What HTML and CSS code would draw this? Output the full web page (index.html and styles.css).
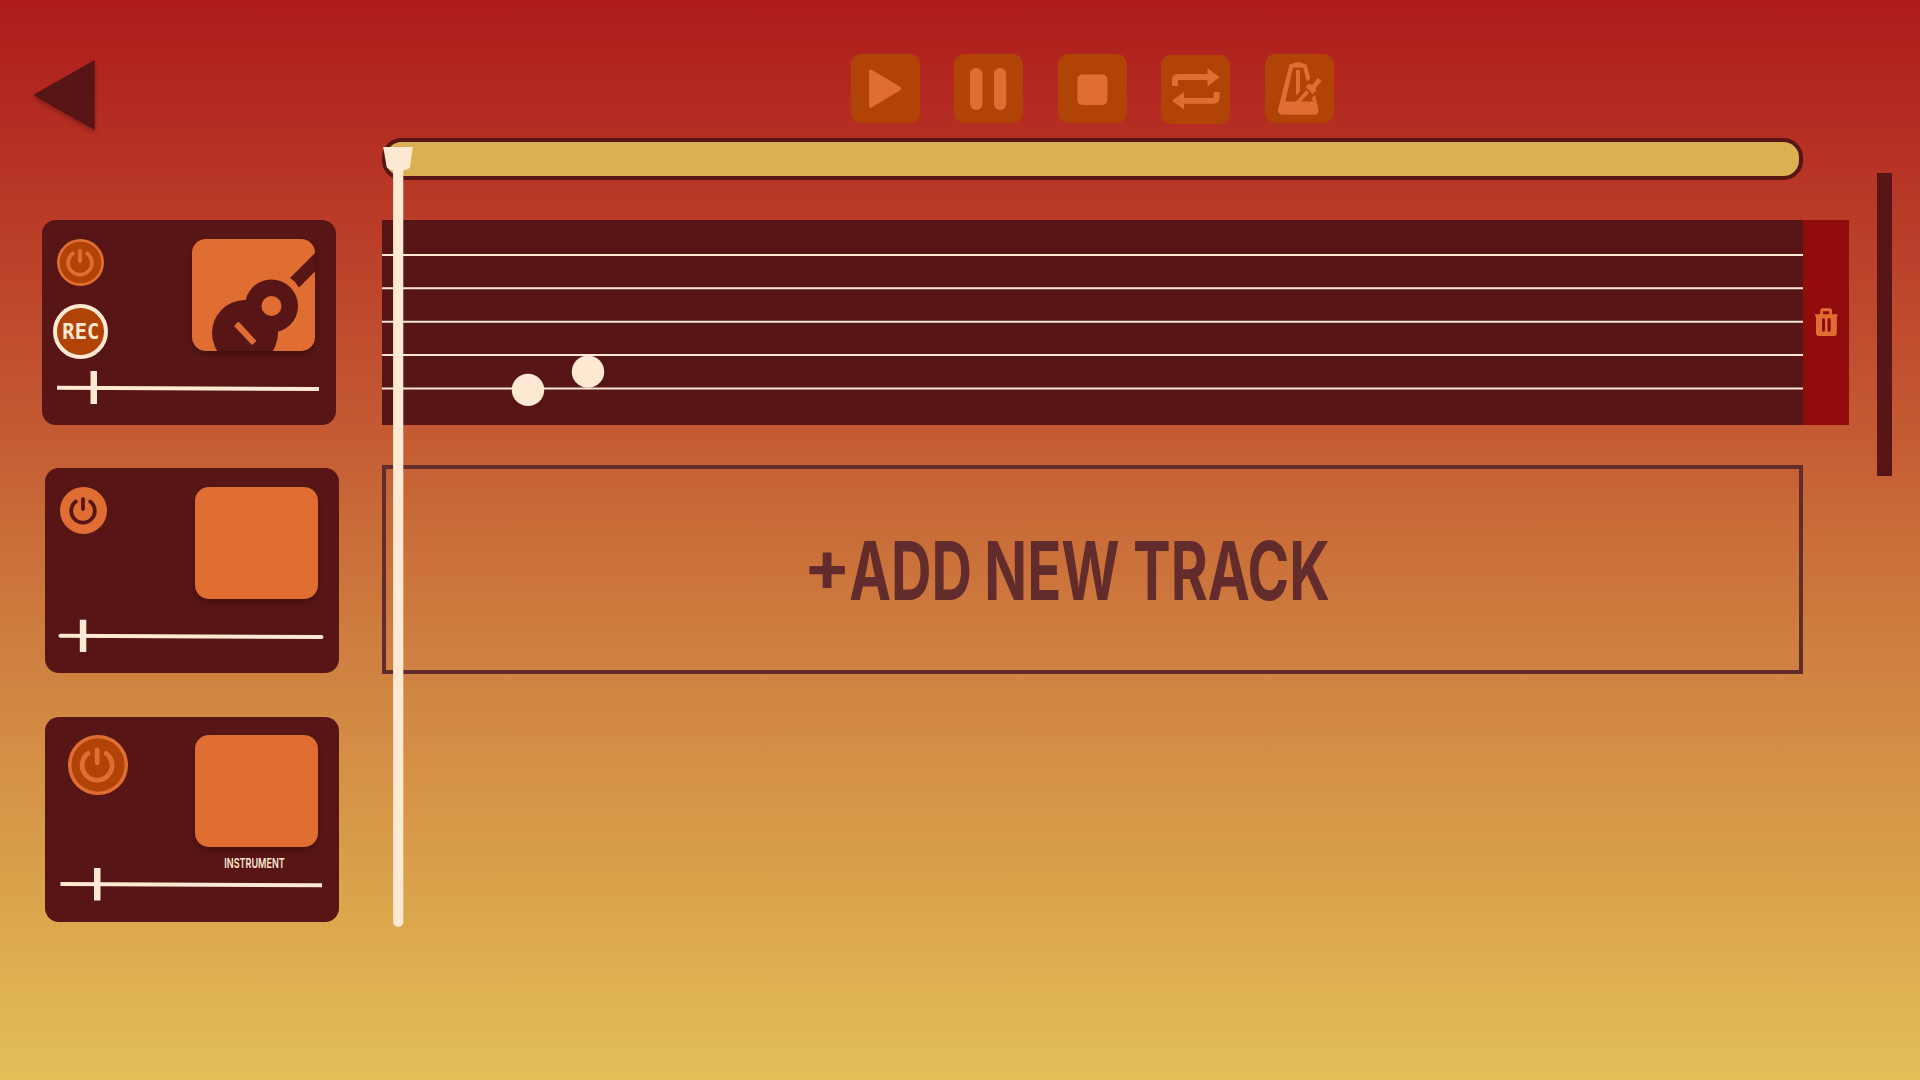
FILE: index.html
```html
<!DOCTYPE html>
<html lang="en">
<head>
<meta charset="utf-8">
<title>Track editor</title>
<link rel="stylesheet" href="styles.css">
</head>
<body>
<svg class="defs" width="0" height="0" aria-hidden="true">
  <symbol id="power" viewBox="0 0 47 47">
    <path d="M15.8 14.2A11.8 11.8 0 1 0 30.2 14.2" transform="translate(0 .3)"/>
    <path d="M23 11.8V22"/>
  </symbol>
</svg>
<main class="app">
  <header class="top">
    <button class="back" aria-label="Back"><svg width="74" height="82" viewBox="0 0 74 82"><path d="M3 40L64.700 5V75Z" fill="#571515"/></svg></button>
    <nav class="transport">
      <button class="tool" aria-label="Play"><svg viewBox="0 0 69 69"><path d="M18 17.5Q18 14.5 20.6 15.8L49.5 33Q51 34.5 49.5 36L20.6 53.5Q18 54.8 18 51.8Z"/></svg></button>
      <button class="tool" aria-label="Pause"><svg viewBox="0 0 69 69"><rect x="16" y="14" width="12.5" height="42" rx="6.2"/><rect x="40" y="14" width="12.2" height="42" rx="6.1"/></svg></button>
      <button class="tool" aria-label="Stop"><svg viewBox="0 0 69 69"><rect x="19.4" y="20.5" width="30" height="30.5" rx="5"/></svg></button>
      <button class="tool loop" aria-label="Loop"><svg viewBox="0 0 69 69"><path d="M11 31V25Q11 19 17 19H46.5V13L58.5 22.2L46.5 31.5V25H17V31ZM58.5 37V42.5Q58.5 48.7 52.5 48.7H23V54.5L11 45.7L23 37V43H52.7V37Z"/></svg></button>
      <button class="tool" aria-label="Metronome"><svg viewBox="0 0 69 69">
        <path d="M24.5 10.5L33 8L41.500 10.500L45.500 24.500L41.500 27.500L38.300 13.500H28L20.300 47.500H31L41.500 36.200L44 38.800L36 47.500H48.500L46.300 44.500L50 40.800L53.500 55.500Q54 60.800 49 60.800H17.500Q12.600 60.500 13 55.500Z"/>
        <path d="M31 16H35V37.500L31 41.500Z"/>
        <path d="M40.500 32.500L44.500 29.500L47 31.500L53 24L56.500 27L50.200 34.500L51.500 36.500L47.500 40Z"/>
      </svg></button>
    </nav>
  </header>

  <section class="workspace">
    <aside class="cards">
      <article class="card first">
        <div class="row">
          <div class="controls">
            <button class="power dim" aria-label="Power"><svg><use href="#power"/></svg></button>
            <button class="rec" aria-label="Record"><svg viewBox="0 0 47 47"><text x="5.300" y="31.300" textLength="37" lengthAdjust="spacingAndGlyphs">REC</text></svg></button>
          </div>
          <div class="thumb"><svg viewBox="0 0 123 112">
            <circle cx="53" cy="94" r="33"/><circle cx="79.500" cy="67" r="26.500"/><path d="M98 39L124 13V31.500L107 48.500Q103 42 98 39Z"/>
            <circle class="hole" cx="79.500" cy="67" r="10"/><path class="hole" d="M46.500 82.500L64.500 102L60 106L42 87Z"/>
          </svg></div>
        </div>
        <svg class="slider" viewBox="0 0 294 75"><path d="M15 36.800L277 38"/><rect x="48.500" y="20" width="6.500" height="33"/></svg>
      </article>
      <article class="card">
        <div class="row">
          <div class="controls"><button class="power lit" aria-label="Power"><svg><use href="#power"/></svg></button></div>
          <div class="thumb"></div>
        </div>
        <svg class="slider" viewBox="0 0 294 75"><path class="round" d="M15.500 36.800L276.500 38"/><rect x="34.800" y="20.700" width="6.500" height="32.300"/></svg>
      </article>
      <article class="card">
        <div class="row">
          <div class="controls wide"><button class="power dim big" aria-label="Power"><svg><use href="#power"/></svg></button></div>
          <div class="thumb"></div>
        </div>
        <svg class="slider" viewBox="0 0 294 75"><text x="179.300" y="20.800" textLength="60.500" lengthAdjust="spacingAndGlyphs">INSTRUMENT</text><path d="M15.500 37L277 38.200"/><rect x="49" y="21" width="6.500" height="32.500"/></svg>
      </article>
    </aside>

    <div class="editor">
      <div class="timeline"></div>
      <div class="track">
        <svg class="staff" viewBox="0 0 1421 205.500" preserveAspectRatio="none">
          <path d="M0 35H1421M0 68.500H1421M0 102H1421M0 135.300H1421M0 168.800H1421"/>
          <circle cx="146" cy="170.300" r="16.200"/><circle cx="206" cy="152" r="16.200"/>
        </svg>
        <button class="delete" aria-label="Delete track"><svg width="24" height="30" viewBox="0 0 24 30">
          <path fill-rule="evenodd" d="M1 7.200H6.200V3.800Q6.200 1.200 8.700 1.200H15.500Q18 1.200 18 3.800V7.200H23.600V9.200H22.800V26Q22.800 29 20 29H5Q2 29 2 26V9.200H1ZM9 7.200H15.300V4.200H9ZM8 12.500V23Q8 25 9.500 25Q11 25 11 23V12.500Q11 11 9.500 11Q8 11 8 12.500ZM13.500 12.500V23Q13.500 25 15 25Q16.700 25 16.700 23V12.500Q16.700 11 15 11Q13.500 11 13.500 12.500Z"/></svg></button>
      </div>
      <button class="add"><svg viewBox="0 0 1421 210">
        <text class="plus" x="421" y="126">+</text>
        <g transform="scale(.69 1)">
          <text x="677" y="135" textLength="178" lengthAdjust="spacingAndGlyphs">ADD</text>
          <text x="873" y="135" textLength="196" lengthAdjust="spacingAndGlyphs">NEW</text>
          <text x="1088.400" y="135" textLength="285.500" lengthAdjust="spacingAndGlyphs">TRACK</text>
        </g>
      </svg></button>
    </div>

    <div class="scrollbar"></div>
  </section>
  <svg class="playhead" width="31" height="781" viewBox="0 0 31 781"><path d="M0 0H30Q30 0 29.500 2L27 20Q26.500 22 20.300 23.500V774.800A5.100 5.100 0 0 1 10.100 774.800V23.500Q5 22 3.700 20L.6 2Z"/></svg>
</main>
</body>
</html>
```
FILE: styles.css
```css
* { box-sizing: border-box; }
body { margin: 0; font-family: "Inter", "Liberation Sans", sans-serif; }
button { border: 0; padding: 0; margin: 0; background: none; display: block; font: inherit; }
svg { display: block; }
.defs { position: absolute; }

.app {
  position: relative;
  width: 1920px;
  height: 1080px;
  overflow: hidden;
  background: linear-gradient(180deg, #ae1b1c 0%, #c55e34 42%, #c86937 47%, #cf7f40 60%, #dba54c 84%, #e3bf58 100%);
}

.top { display: flex; height: 138px; }
.back { margin: 55px 0 0 30px; width: 74px; height: 82px; }
.back svg { filter: drop-shadow(0 3px 2px rgba(0, 0, 0, .25)); }
.transport { display: flex; gap: 34.600px; margin: 54px 0 0 746.700px; }
.tool { width: 69px; height: 69px; border-radius: 10px; background: #b14307; }
.tool svg { width: 69px; height: 69px; fill: #e06e32; }
.loop { margin-top: 1px; }

.workspace { display: flex; }
.cards { width: 382px; padding: 82px 0 0 45px; display: flex; flex-direction: column; gap: 43.400px; }
.card { width: 294px; height: 205px; border-radius: 14px; background: #571515; padding-top: 18.300px; }
.card.first { margin-left: -3px; padding-top: 19px; }
.row { display: flex; justify-content: space-between; height: 112px; padding: 0 21px 0 15px; }
.controls.wide { padding-left: 8px; }
.thumb { width: 123px; height: 112px; border-radius: 14px; background: #e06e32; box-shadow: 0 3px 4px rgba(0, 0, 0, .25); overflow: hidden; }
.thumb svg { width: 123px; height: 112px; fill: #571515; }
.thumb .hole { fill: #e06e32; }

.power { width: 47px; height: 47px; border-radius: 50%; background: #e06e32; }
.power svg { width: 100%; height: 100%; fill: none; stroke: #e06e32; stroke-width: 3.800; stroke-linecap: round; }
.power.dim { background: radial-gradient(closest-side, #b14307 87%, #e06e32 90%); }
.power.lit svg { stroke: #571515; }
.power.big { width: 59.500px; height: 59.500px; }
.rec { width: 55px; height: 55px; margin: 18px 0 0 -4px; border-radius: 50%; border: 4px solid #ffe9d2; background: #b14307; }
.rec svg { width: 47px; height: 47px; }
.rec text { font: 700 22px "DejaVu Sans Mono", monospace; fill: #ffe9d2; }

.slider { width: 294px; height: 75px; fill: #ffe9d2; }
.slider path { stroke: #ffe9d2; stroke-width: 4; }
.slider .round { stroke-linecap: round; }
.slider text { font: 600 13px "Inter", sans-serif; }

.editor { width: 1467px; }
.timeline { width: 1421px; height: 42px; border: 4px solid #571515; border-radius: 19.500px; background: #dcaf53; }
.track { display: flex; height: 205px; margin-top: 40px; }
.staff { width: 1421px; height: 205px; background: #571515; fill: #ffe9d2; }
.staff path { stroke: #ffe9d2; stroke-width: 2; }
.delete { width: 46px; background: #920c0e; display: flex; justify-content: center; align-items: center; }
.delete svg { fill: #e06e32; margin-top: -2px; }
.add { width: 1421px; height: 209px; margin-top: 39.500px; border: 4px solid #632c2c; }
.add svg { width: 1421px; height: 210px; margin: -4px; fill: #632c2c; }
.add text { font: 700 81px "Inter", sans-serif; }
.add .plus { font-size: 71px; }

.scrollbar { width: 15px; height: 303px; margin: 35px 0 0 28px; background: #571515; }
.playhead { position: absolute; left: 383px; top: 147px; fill: #ffe9d2; }
```
